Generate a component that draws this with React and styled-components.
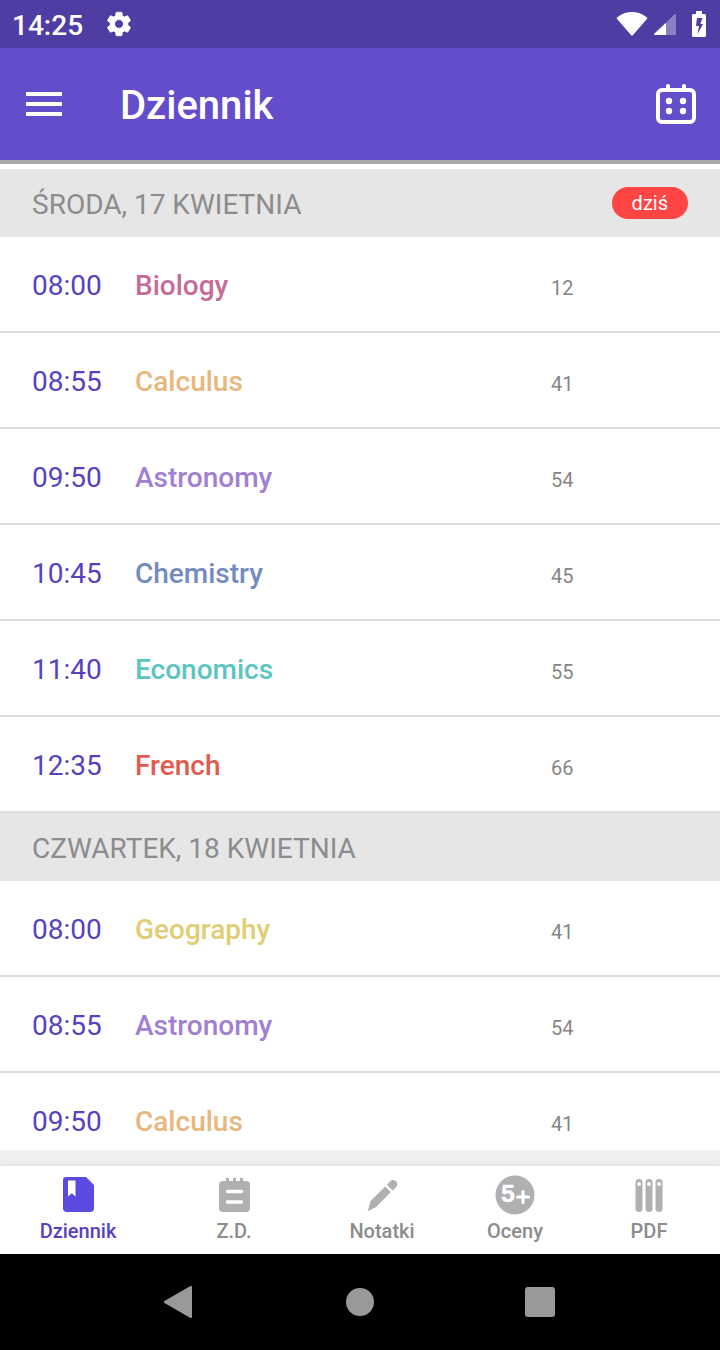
import React from 'react';
import styled, { createGlobalStyle } from 'styled-components';

const GlobalStyle = createGlobalStyle`
  * {
    box-sizing: border-box;
  }

  body {
    margin: 0;
    background: #fff;
    font-family: Roboto, "Noto Sans", sans-serif;
  }
`;

const Screen = styled.div`
  display: flex;
  flex-direction: column;
  height: 100vh;
  overflow: hidden;
`;

const StatusBar = styled.div`
  flex: none;
  display: flex;
  align-items: center;
  justify-content: space-between;
  height: 48px;
  padding: 0 14px 0 12px;
  background: #4f3da3;
  color: #fff;
`;

const StatusGroup = styled.div`
  display: flex;
  align-items: center;
  gap: ${({ $gap }) => $gap}px;
`;

const Clock = styled.span`
  padding-top: 4px;
  font-size: 28px;
  font-weight: 500;
  line-height: 32px;
`;

const AppBar = styled.header`
  flex: none;
  display: flex;
  align-items: center;
  height: 116px;
  padding: 0 24px;
  background: #634dcb;
  color: #fff;
  border-bottom: 4px solid #a8a8aa;
`;

const Title = styled.h1`
  flex: 1;
  margin: 0;
  padding: 4px 0 0 56px;
  font-size: 40px;
  font-weight: 500;
  line-height: 48px;
`;

const IconButton = styled.button`
  display: flex;
  align-items: center;
  justify-content: center;
  width: 40px;
  height: 40px;
  padding: 0;
  border: 0;
  background: none;
  color: inherit;
`;

const Timetable = styled.main`
  flex: 1;
  min-height: 0;
  padding-top: 5px;
  overflow: hidden;
`;

const DayHeader = styled.div`
  display: flex;
  align-items: center;
  justify-content: space-between;
  height: 68px;
  padding: 0 32px;
  background: #e6e6e6;
`;

const DayName = styled.h2`
  margin: 0;
  padding-top: 4px;
  color: #8c8c8c;
  font-size: 28px;
  font-weight: 400;
  line-height: 32px;
  text-transform: uppercase;
`;

const TodayBadge = styled.span`
  padding: 1px 20px 0;
  border-radius: 16px;
  background: #ff4444;
  color: #fff;
  font-size: 20px;
  line-height: 31px;
`;

const LessonList = styled.ul`
  margin: 0;
  padding: 0;
  list-style: none;
`;

const LessonRow = styled.li`
  display: grid;
  grid-template-columns: 103px 1fr 137px;
  align-items: center;
  height: 96px;
  padding: 4px 32px 0;
  border-bottom: 2px solid #dedede;
  font-size: 28px;
  line-height: 32px;
`;

const Time = styled.time`
  color: #5543c0;
`;

const Subject = styled.span`
  color: ${({ $color }) => $color};
  font-weight: 500;
`;

const Room = styled.span`
  padding-top: 4px;
  color: #858585;
  font-size: 20px;
`;

const TabStrip = styled.div`
  flex: none;
  padding-top: 16px;
  background: #efefef;
`;

const TabBar = styled.nav`
  display: grid;
  grid-template-columns: 156fr 156fr 140fr 126fr 142fr;
  height: 88px;
  background: #fff;
  box-shadow: 0 0 4px rgba(0, 0, 0, 0.12);
`;

const TabLink = styled.a`
  display: flex;
  flex-direction: column;
  align-items: center;
  padding-top: 9px;
  color: ${({ $active }) => ($active ? '#5543c0' : '#8c8c8c')};
  font-size: 20px;
  font-weight: 500;
  line-height: 24px;
  text-decoration: none;

  svg {
    margin-bottom: 4px;
    color: ${({ $active }) => ($active ? '#5b4be0' : '#b0b0b3')};
  }
`;

const SystemBar = styled.div`
  flex: none;
  display: flex;
  align-items: center;
  justify-content: center;
  gap: 140px;
  height: 96px;
  background: #000;
  color: #999;
`;

const GearIcon = () => (
  <svg width="28" height="28" viewBox="0 0 24 24" fill="currentColor">
    <path
      stroke="currentColor"
      strokeWidth="0.8"
      d="M19.43 12.98c.04-.32.07-.64.07-.98s-.03-.66-.07-.98l2.11-1.65c.19-.15.24-.42.12-.64l-2-3.46c-.12-.22-.39-.3-.61-.22l-2.49 1c-.52-.4-1.08-.73-1.69-.98l-.38-2.65C14.46 2.18 14.25 2 14 2h-4c-.25 0-.46.18-.49.42l-.38 2.65c-.61.25-1.17.59-1.69.98l-2.49-1c-.23-.09-.49 0-.61.22l-2 3.46c-.13.22-.07.49.12.64l2.11 1.65c-.04.32-.07.65-.07.98s.03.66.07.98l-2.11 1.65c-.19.15-.24.42-.12.64l2 3.46c.12.22.39.3.61.22l2.49-1c.52.4 1.08.73 1.69.98l.38 2.65c.03.24.24.42.49.42h4c.25 0 .46-.18.49-.42l.38-2.65c.61-.25 1.17-.59 1.69-.98l2.49 1c.23.09.49 0 .61-.22l2-3.46c.12-.22.07-.49-.12-.64l-2.11-1.65zM12 15.8c-2.1 0-3.8-1.7-3.8-3.8s1.7-3.8 3.8-3.8 3.8 1.7 3.8 3.8-1.7 3.8-3.8 3.8z"
    />
  </svg>
);

const WifiIcon = () => (
  <svg width="32" height="26" viewBox="0 0 32 26" fill="currentColor">
    <path d="M1.3 6.2C5.500 2.700 10.600 1 16 1s10.500 1.700 14.700 5.200c.7.6.7 1.300.2 1.900L17 24c-.6.700-1.400.700-2 0L1.100 8.100c-.5-.6-.5-1.300.2-1.900z" />
  </svg>
);

const SignalIcon = () => (
  <svg width="22" height="26" viewBox="0 0 22 26" fill="currentColor">
    <path d="M12 11.800V24H1c-1 0-1.300-.8-.6-1.500z" />
    <path opacity="0.35" d="M12 11.800 20.500 3.300c.6-.6 1.500-.3 1.500.6V23c0 .6-.4 1-1 1h-9z" />
  </svg>
);

const BatteryIcon = () => (
  <svg width="14" height="26" viewBox="0 0 14 26" fill="currentColor">
    <path
      fillRule="evenodd"
      d="M4 0h6v3h2.500c.9 0 1.500.6 1.500 1.500v20c0 .9-.6 1.500-1.500 1.500h-11C.6 26 0 25.400 0 24.500v-20C0 3.600.6 3 1.500 3H4zM5 7 4 15h3l-1.500 8L11 13H8.300L10.500 7z"
    />
  </svg>
);

const MenuIcon = () => (
  <svg width="36" height="24" viewBox="0 0 36 24" fill="currentColor">
    <path d="M0 0h36v4H0zM0 10h36v4H0zM0 20h36v4H0z" />
  </svg>
);

const CalendarIcon = () => (
  <svg width="40" height="40" viewBox="0 0 40 40" fill="none" stroke="currentColor" strokeWidth="4">
    <rect x="2" y="6" width="36" height="32" rx="4" />
    <path strokeLinecap="round" d="M12 2v4M28 2v4" />
    <g fill="currentColor" stroke="none">
      <circle cx="13" cy="17" r="3.200" />
      <circle cx="27" cy="17" r="3.200" />
      <circle cx="13" cy="27" r="3.200" />
      <circle cx="27" cy="27" r="3.200" />
    </g>
  </svg>
);

const DiaryIcon = () => (
  <svg width="40" height="40" viewBox="0 0 40 40" fill="currentColor">
    <path
      fillRule="evenodd"
      d="M8 2h20l8 8v23.500c0 2-1.500 3.500-3.500 3.500H8.500c-2 0-3.500-1.500-3.500-3.500V5c0-2 1-3 3-3zM10 5.500v16l3.800-3.200 3.700 3.200v-16z"
    />
  </svg>
);

const HomeworkIcon = () => (
  <svg width="40" height="40" viewBox="0 0 40 40" fill="currentColor">
    <rect x="5" y="6" width="31" height="31" rx="4" />
    <g stroke="currentColor" strokeWidth="3" strokeLinecap="round">
      <path d="M13.500 4v4M20.500 4v4M27.500 4v4" />
    </g>
    <g stroke="#fff" strokeWidth="3.500" strokeLinecap="round">
      <path d="M13.500 16.500h14M13.500 27h14" />
    </g>
  </svg>
);

const PencilIcon = () => (
  <svg width="40" height="40" viewBox="0 0 40 40" fill="currentColor">
    <path d="M23.200 11.500 28.700 17 14.500 31.700 6.500 36c-.5.200-.8-.1-.6-.6L8.600 26z" />
    <path d="M25 9.700 28 6.500c4-4 10 1.500 6 6L30.600 15.500z" />
  </svg>
);

const GradesIcon = () => (
  <svg width="40" height="40" viewBox="0 0 40 40" fill="currentColor">
    <circle cx="20" cy="20" r="19.500" />
    <g fill="#fff" stroke="#fff" strokeLinecap="round">
      <text x="5.500" y="27" fontSize="23" fontFamily="Inter, sans-serif" fontWeight="700" strokeWidth="0.4">5</text>
      <path strokeWidth="3.200" d="M22.500 22h11M28 16.500v11" />
    </g>
  </svg>
);

const FilesIcon = () => (
  <svg width="40" height="40" viewBox="0 0 40 40" fill="currentColor">
    {[10, 20, 30].map((x) => (
      <g key={x}>
        <rect x={x - 3.500} y="4" width="7" height="33" rx="3.500" />
        <circle cx={x} cy="9" r="2" fill="#fff" />
      </g>
    ))}
  </svg>
);

const BackIcon = () => (
  <svg width="40" height="40" viewBox="0 0 40 40" fill="currentColor">
    <path d="M4.500 19 30 4.200c1-.6 2-.2 2 1v29.600c0 1.200-1 1.600-2 1L4.500 21c-.8-.5-.8-1.500 0-2z" />
  </svg>
);

const HomeIcon = () => (
  <svg width="40" height="40" viewBox="0 0 40 40" fill="currentColor">
    <circle cx="20" cy="20" r="14" />
  </svg>
);

const RecentIcon = () => (
  <svg width="40" height="40" viewBox="0 0 40 40" fill="currentColor">
    <rect x="5" y="5" width="30" height="30" rx="3" />
  </svg>
);

const subjectColors = {
  Biology: '#c76b98',
  Calculus: '#e8b77d',
  Astronomy: '#a27fd3',
  Chemistry: '#748bbf',
  Economics: '#5bc5c0',
  French: '#e35b4f',
  Geography: '#e0cd75',
};

const days = [
  {
    name: 'Środa, 17 kwietnia',
    today: true,
    lessons: [
      { time: '08:00', subject: 'Biology', room: '12' },
      { time: '08:55', subject: 'Calculus', room: '41' },
      { time: '09:50', subject: 'Astronomy', room: '54' },
      { time: '10:45', subject: 'Chemistry', room: '45' },
      { time: '11:40', subject: 'Economics', room: '55' },
      { time: '12:35', subject: 'French', room: '66' },
    ],
  },
  {
    name: 'Czwartek, 18 kwietnia',
    lessons: [
      { time: '08:00', subject: 'Geography', room: '41' },
      { time: '08:55', subject: 'Astronomy', room: '54' },
      { time: '09:50', subject: 'Calculus', room: '41' },
    ],
  },
];

const tabs = [
  { label: 'Dziennik', icon: DiaryIcon, href: '#dziennik' },
  { label: 'Z.D.', icon: HomeworkIcon, href: '#zd' },
  { label: 'Notatki', icon: PencilIcon, href: '#notatki' },
  { label: 'Oceny', icon: GradesIcon, href: '#oceny' },
  { label: 'PDF', icon: FilesIcon, href: '#pdf' },
];

const Day = ({ name, today, lessons }) => (
  <section>
    <DayHeader>
      <DayName>{name}</DayName>
      {today && <TodayBadge>dziś</TodayBadge>}
    </DayHeader>
    <LessonList>
      {lessons.map(({ time, subject, room }) => (
        <LessonRow key={time}>
          <Time>{time}</Time>
          <Subject $color={subjectColors[subject]}>{subject}</Subject>
          <Room>{room}</Room>
        </LessonRow>
      ))}
    </LessonList>
  </section>
);

const App = () => (
  <>
    <GlobalStyle />
    <Screen>
      <StatusBar>
        <StatusGroup $gap={22}>
          <Clock>14:25</Clock>
          <GearIcon />
        </StatusGroup>
        <StatusGroup $gap={6}>
          <WifiIcon />
          <StatusGroup $gap={16}>
            <SignalIcon />
            <BatteryIcon />
          </StatusGroup>
        </StatusGroup>
      </StatusBar>
      <AppBar>
        <IconButton aria-label="Menu">
          <MenuIcon />
        </IconButton>
        <Title>Dziennik</Title>
        <IconButton aria-label="Kalendarz">
          <CalendarIcon />
        </IconButton>
      </AppBar>
      <Timetable>
        {days.map((day) => (
          <Day key={day.name} {...day} />
        ))}
      </Timetable>
      <TabStrip>
        <TabBar>
          {tabs.map(({ label, icon: Icon, href }, index) => (
            <TabLink key={label} href={href} $active={index === 0}>
              <Icon />
              {label}
            </TabLink>
          ))}
        </TabBar>
      </TabStrip>
      <SystemBar>
        <IconButton aria-label="Wstecz">
          <BackIcon />
        </IconButton>
        <IconButton aria-label="Ekran główny">
          <HomeIcon />
        </IconButton>
        <IconButton aria-label="Ostatnie">
          <RecentIcon />
        </IconButton>
      </SystemBar>
    </Screen>
  </>
);

export default App;
